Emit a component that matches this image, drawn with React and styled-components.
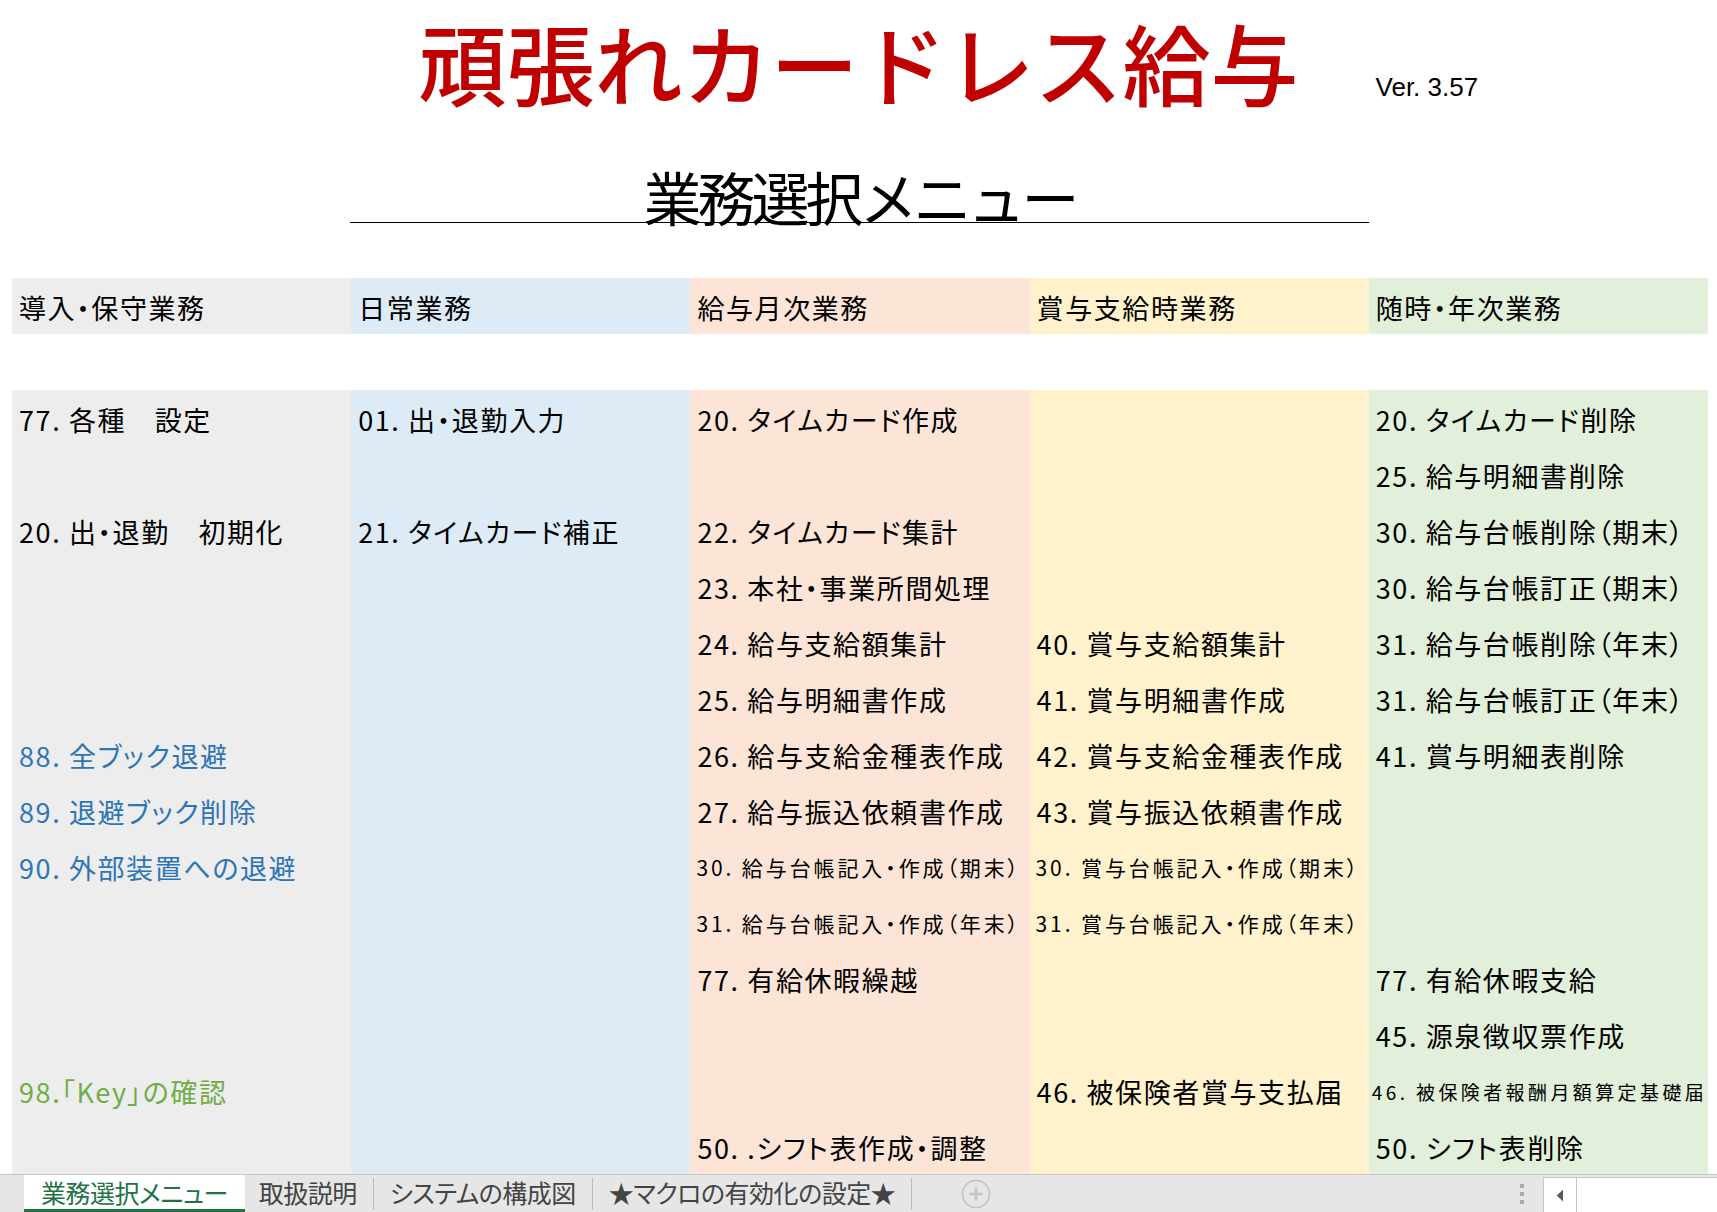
import React from "react";
import styled, { createGlobalStyle } from "styled-components";

const GlobalStyle = createGlobalStyle`
    html, body {
        margin: 0;
        padding: 0;
        background: #ffffff;
    }
    body {
        font-family: "Noto Sans CJK JP", "Noto Sans", sans-serif;
    }
`;

const rowHeight = 56;
const colWidth = 339.2;

const Page = styled.div`
    width: 1717px;
    height: 1212px;
    overflow: hidden;
    display: flex;
    flex-direction: column;
    background: #ffffff;
`;

const TitleRow = styled.div`
    height: 167px;
    display: flex;
    align-items: flex-start;
`;

const Side = styled.div`
    flex: 1;
    min-width: 0;
`;

const Title = styled.div`
    flex: none;
    margin-top: 5px;
    padding: 0 8px;
    font-family: "Noto Sans CJK JP", sans-serif;
    font-size: 88px;
    line-height: 112px;
    font-weight: 500;
    color: #c00000;
    white-space: nowrap;
`;

const Version = styled.div`
    margin-top: 72px;
    padding-left: 69px;
    font-family: "Liberation Sans", Arial, sans-serif;
    font-size: 26px;
    line-height: 30px;
    color: #000000;
`;

const SubtitleWrap = styled.div`
    margin-left: 350px;
    width: 1019px;
    height: 55px;
    border-bottom: 1px solid #000000;
    text-align: center;
`;

const Subtitle = styled.h2`
    margin: 0;
    font-family: "Noto Sans CJK JP", sans-serif;
    font-size: 58px;
    line-height: 58px;
    font-weight: 400;
    letter-spacing: -4px;
    color: #000000;
    white-space: nowrap;
`;

const Table = styled.div`
    margin-top: 55px;
    margin-left: 12px;
    width: ${colWidth * 5}px;
    display: flex;
    flex-direction: column;
`;

const HeaderRow = styled.div`
    display: grid;
    grid-template-columns: repeat(5, ${colWidth}px);
`;

const Spacer = styled.div`
    height: ${rowHeight}px;
`;

const Body = styled.div`
    display: grid;
    grid-template-columns: repeat(5, ${colWidth}px);
`;

const Column = styled.div`
    display: flex;
    flex-direction: column;
    background: ${(p) => p.bg};
`;

const toneColors = {
    black: "#000000",
    blue: "#2e75b6",
    green: "#70ad47",
};

const sizes = {
    md: { font: 27, spacing: 1.6, pad: 7 },
    sm: { font: 21, spacing: 2.9, pad: 6 },
    xs: { font: 19, spacing: 3.4, pad: 3 },
};

const Cell = styled.div`
    height: ${rowHeight}px;
    box-sizing: border-box;
    padding-left: ${(p) => sizes[p.size].pad}px;
    padding-top: 2px;
    display: flex;
    align-items: center;
    background: ${(p) => p.bg || "transparent"};
    color: ${(p) => toneColors[p.tone]};
    font-family: "Noto Sans CJK JP", sans-serif;
    font-size: ${(p) => sizes[p.size].font}px;
    letter-spacing: ${(p) => sizes[p.size].spacing}px;
    font-feature-settings: "palt";
    white-space: nowrap;
`;

const TabBar = styled.div`
    margin-top: auto;
    height: 38px;
    box-sizing: border-box;
    border-top: 1px solid #c6c6c6;
    background: #e6e6e6;
    display: flex;
    align-items: stretch;
    padding-left: 24px;
`;

const Tab = styled.div`
    display: flex;
    align-items: center;
    padding: 0 ${(p) => (p.active ? 17 : 14)}px;
    box-sizing: border-box;
    background: ${(p) => (p.active ? "#ffffff" : "transparent")};
    border-bottom: 3px solid ${(p) => (p.active ? "#217346" : "transparent")};
    color: ${(p) => (p.active ? "#217346" : "#444444")};
    font-family: "Noto Sans CJK JP", sans-serif;
    font-size: 25px;
    letter-spacing: -0.5px;
    font-feature-settings: "palt";
    white-space: nowrap;
`;

const TabDivider = styled.div`
    width: 1px;
    margin: 3px 2px 2px;
    background: #b9b9b9;
`;

const AddSheet = styled.div`
    display: flex;
    align-items: center;
    margin-left: 47px;
`;

const RightTools = styled.div`
    margin-left: auto;
    display: flex;
    align-items: stretch;
`;

const Grip = styled.div`
    display: flex;
    flex-direction: column;
    justify-content: center;
    gap: 4px;
    margin-right: 19px;
    span {
        width: 4px;
        height: 4px;
        background: #a8a8a8;
    }
`;

const ScrollBox = styled.div`
    width: 173px;
    margin-top: 2px;
    background: #ffffff;
    border-left: 1px solid #c6c6c6;
    border-top: 1px solid #c6c6c6;
    display: flex;
`;

const ScrollButton = styled.div`
    width: 32px;
    border-right: 1px solid #c6c6c6;
    display: flex;
    align-items: center;
    justify-content: center;
`;

const columns = [
    {
        title: "導入・保守業務",
        bg: "#ededed",
        cells: [
            { t: "77. 各種　設定" },
            null,
            { t: "20. 出・退勤　初期化" },
            null,
            null,
            null,
            { t: "88. 全ブック退避", tone: "blue" },
            { t: "89. 退避ブック削除", tone: "blue" },
            { t: "90. 外部装置への退避", tone: "blue" },
            null,
            null,
            null,
            { t: "98.「Key」の確認", tone: "green" },
            null,
        ],
    },
    {
        title: "日常業務",
        bg: "#ddebf7",
        cells: [
            { t: "01. 出・退勤入力" },
            null,
            { t: "21. タイムカード補正" },
        ],
    },
    {
        title: "給与月次業務",
        bg: "#fce4d6",
        cells: [
            { t: "20. タイムカード作成" },
            null,
            { t: "22. タイムカード集計" },
            { t: "23. 本社・事業所間処理" },
            { t: "24. 給与支給額集計" },
            { t: "25. 給与明細書作成" },
            { t: "26. 給与支給金種表作成" },
            { t: "27. 給与振込依頼書作成" },
            { t: "30. 給与台帳記入・作成（期末）", size: "sm" },
            { t: "31. 給与台帳記入・作成（年末）", size: "sm" },
            { t: "77. 有給休暇繰越" },
            null,
            null,
            { t: "50. .シフト表作成・調整" },
        ],
    },
    {
        title: "賞与支給時業務",
        bg: "#fff2cc",
        cells: [
            null,
            null,
            null,
            null,
            { t: "40. 賞与支給額集計" },
            { t: "41. 賞与明細書作成" },
            { t: "42. 賞与支給金種表作成" },
            { t: "43. 賞与振込依頼書作成" },
            { t: "30. 賞与台帳記入・作成（期末）", size: "sm" },
            { t: "31. 賞与台帳記入・作成（年末）", size: "sm" },
            null,
            null,
            { t: "46. 被保険者賞与支払届" },
            null,
        ],
    },
    {
        title: "随時・年次業務",
        bg: "#e2efda",
        cells: [
            { t: "20. タイムカード削除" },
            { t: "25. 給与明細書削除" },
            { t: "30. 給与台帳削除（期末）" },
            { t: "30. 給与台帳訂正（期末）" },
            { t: "31. 給与台帳削除（年末）" },
            { t: "31. 給与台帳訂正（年末）" },
            { t: "41. 賞与明細表削除" },
            null,
            null,
            null,
            { t: "77. 有給休暇支給" },
            { t: "45. 源泉徴収票作成" },
            { t: "46. 被保険者報酬月額算定基礎届", size: "xs" },
            { t: "50. シフト表削除" },
        ],
    },
];

const ROWS = 14;

const tabs = ["業務選択メニュー", "取扱説明", "システムの構成図", "★マクロの有効化の設定★"];

const PlusCircle = () => (
    <svg width="30" height="30" viewBox="0 0 30 30">
        <circle cx="15" cy="15" r="13.5" fill="none" stroke="#c4c4c4" strokeWidth="1.6" />
        <path d="M15 8.5v13M8.5 15h13" stroke="#c4c4c4" strokeWidth="2.6" />
    </svg>
);

const LeftArrow = () => (
    <svg width="8" height="13" viewBox="0 0 8 13">
        <path d="M7 0.5L0.8 6.5L7 12.5Z" fill="#5a5a5a" />
    </svg>
);

const App = () => {
    return (
        <>
            <GlobalStyle />
            <Page>
                <TitleRow>
                    <Side />
                    <Title>頑張れカードレス給与</Title>
                    <Side>
                        <Version>Ver. 3.57</Version>
                    </Side>
                </TitleRow>
                <SubtitleWrap>
                    <Subtitle>業務選択メニュー</Subtitle>
                </SubtitleWrap>
                <Table>
                    <HeaderRow>
                        {columns.map((col) => (
                            <Cell key={col.title} bg={col.bg} tone="black" size="md">
                                {col.title}
                            </Cell>
                        ))}
                    </HeaderRow>
                    <Spacer />
                    <Body>
                        {columns.map((col) => (
                            <Column key={col.title} bg={col.bg}>
                                {Array.from({ length: ROWS }).map((_, i) => {
                                    const c = col.cells[i];
                                    return (
                                        <Cell
                                            key={i}
                                            tone={(c && c.tone) || "black"}
                                            size={(c && c.size) || "md"}
                                        >
                                            {c ? c.t : ""}
                                        </Cell>
                                    );
                                })}
                            </Column>
                        ))}
                    </Body>
                </Table>
                <TabBar>
                    {tabs.map((name, i) => (
                        <React.Fragment key={name}>
                            <Tab active={i === 0}>{name}</Tab>
                            {i > 0 && <TabDivider />}
                        </React.Fragment>
                    ))}
                    <AddSheet>
                        <PlusCircle />
                    </AddSheet>
                    <RightTools>
                        <Grip>
                            <span />
                            <span />
                            <span />
                        </Grip>
                        <ScrollBox>
                            <ScrollButton>
                                <LeftArrow />
                            </ScrollButton>
                        </ScrollBox>
                    </RightTools>
                </TabBar>
            </Page>
        </>
    );
};

export default App;
